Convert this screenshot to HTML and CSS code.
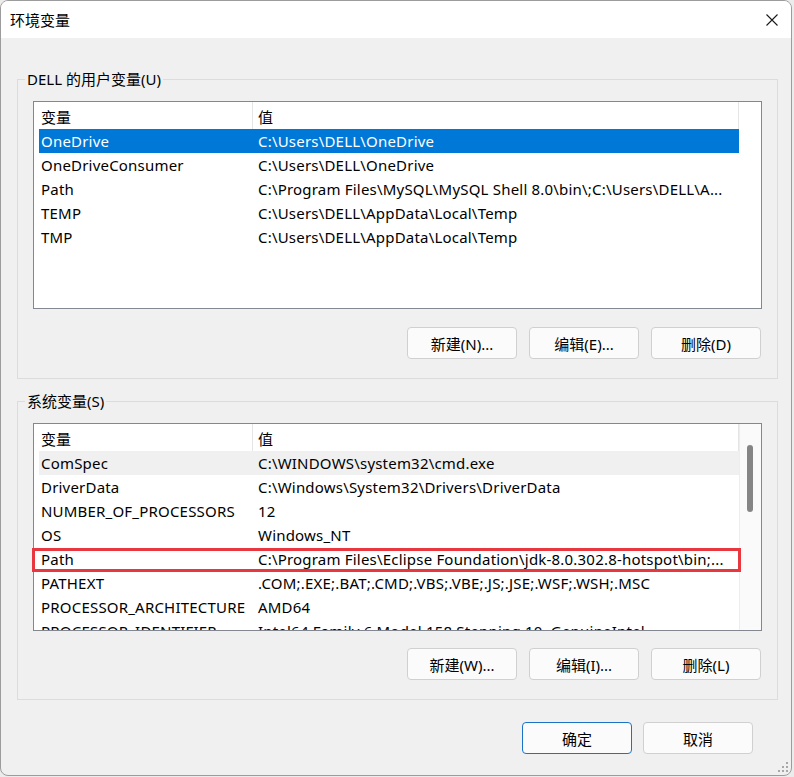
FILE: index.html
```html
<!DOCTYPE html>
<html lang="zh-CN">
<head>
    <meta charset="UTF-8">
    <title>环境变量</title>
    <link rel="stylesheet" href="styles.css">
</head>
<body>
    <div class="window">
        <div class="titlebar">
            <span class="title">环境变量</span>
            <span class="close">
                <svg width="12" height="12" viewBox="0 0 12 12"><path d="M0.5 0.5 L11.5 11.5 M11.5 0.5 L0.5 11.5" stroke="#1a1a1a" stroke-width="1.1" fill="none"/></svg>
            </span>
        </div>

        <div class="content">
            <!-- 用户变量 -->
            <fieldset class="group">
                <legend>DELL 的用户变量(U)</legend>
                <div class="list-wrap">
                    <div class="list">
                        <div class="list-body">
                            <div class="list-head">
                                <div class="col-name">变量</div>
                                <div class="col-value">值</div>
                            </div>
                            <div class="row selected"><div class="cell-name">OneDrive</div><div class="cell-value">C:\Users\DELL\OneDrive</div></div>
                            <div class="row"><div class="cell-name">OneDriveConsumer</div><div class="cell-value">C:\Users\DELL\OneDrive</div></div>
                            <div class="row"><div class="cell-name">Path</div><div class="cell-value">C:\Program Files\MySQL\MySQL Shell 8.0\bin\;C:\Users\DELL\A...</div></div>
                            <div class="row"><div class="cell-name">TEMP</div><div class="cell-value">C:\Users\DELL\AppData\Local\Temp</div></div>
                            <div class="row"><div class="cell-name">TMP</div><div class="cell-value">C:\Users\DELL\AppData\Local\Temp</div></div>
                        </div>
                        <div class="list-side"></div>
                    </div>
                </div>
                <div class="buttons">
                    <button class="btn">新建(N)...</button>
                    <button class="btn">编辑(E)...</button>
                    <button class="btn">删除(D)</button>
                </div>
            </fieldset>

            <!-- 系统变量 -->
            <fieldset class="group group-system">
                <legend>系统变量(S)</legend>
                <div class="list-wrap">
                    <div class="list">
                        <div class="list-body">
                            <div class="list-head">
                                <div class="col-name">变量</div>
                                <div class="col-value">值</div>
                            </div>
                            <div class="row hover"><div class="cell-name">ComSpec</div><div class="cell-value">C:\WINDOWS\system32\cmd.exe</div></div>
                            <div class="row"><div class="cell-name">DriverData</div><div class="cell-value">C:\Windows\System32\Drivers\DriverData</div></div>
                            <div class="row"><div class="cell-name">NUMBER_OF_PROCESSORS</div><div class="cell-value">12</div></div>
                            <div class="row"><div class="cell-name">OS</div><div class="cell-value">Windows_NT</div></div>
                            <div class="row"><div class="cell-name">Path</div><div class="cell-value">C:\Program Files\Eclipse Foundation\jdk-8.0.302.8-hotspot\bin;...</div></div>
                            <div class="row"><div class="cell-name">PATHEXT</div><div class="cell-value">.COM;.EXE;.BAT;.CMD;.VBS;.VBE;.JS;.JSE;.WSF;.WSH;.MSC</div></div>
                            <div class="row"><div class="cell-name">PROCESSOR_ARCHITECTURE</div><div class="cell-value">AMD64</div></div>
                            <div class="row"><div class="cell-name">PROCESSOR_IDENTIFIER</div><div class="cell-value">Intel64 Family 6 Model 158 Stepping 10, GenuineIntel</div></div>
                        </div>
                        <div class="list-side scrollbar"><div class="thumb"></div></div>
                    </div>
                    <!-- 标注框 -->
                    <div class="mark"></div>
                </div>
                <div class="buttons">
                    <button class="btn">新建(W)...</button>
                    <button class="btn">编辑(I)...</button>
                    <button class="btn">删除(L)</button>
                </div>
            </fieldset>

            <div class="dialog-buttons">
                <button class="btn btn-default">确定</button>
                <button class="btn">取消</button>
            </div>
        </div>

        <svg class="grip" width="11" height="11" viewBox="0 0 11 11">
            <rect x="8" y="0" width="2" height="2" fill="#a8a8a8"/>
            <rect x="4" y="4" width="2" height="2" fill="#a8a8a8"/>
            <rect x="8" y="4" width="2" height="2" fill="#a8a8a8"/>
            <rect x="0" y="8" width="2" height="2" fill="#a8a8a8"/>
            <rect x="4" y="8" width="2" height="2" fill="#a8a8a8"/>
            <rect x="8" y="8" width="2" height="2" fill="#a8a8a8"/>
        </svg>
    </div>
</body>
</html>
```

FILE: styles.css
```css
html {
    background: #ececec;
}
body {
    margin: 0;
    font-family: "Noto Sans", "Noto Sans CJK SC", sans-serif;
    font-size: 15px;
    color: #000;
}
.window {
    position: relative;
    width: 792px;
    height: 776px;
    box-sizing: border-box;
    border: 1px solid #9c9c9c;
    border-radius: 8px;
    background: #f0f0f0;
    overflow: hidden;
}
.titlebar {
    height: 37px;
    background: #fff;
    display: flex;
    align-items: center;
    justify-content: space-between;
    padding: 0 13px 0 9px;
}
.title {
    line-height: 20px;
}
.close {
    display: flex;
}
.content {
    padding: 0 13px 0 16px;
}
.group {
    margin: 31px 0 0 0;
    padding: 12px 15px 19px 15px;
    border: 1px solid #dcdcdc;
    min-width: 0;
}
.group-system {
    margin-top: 12px;
}
.group legend {
    padding: 0 2px;
    margin-left: -8px;
    line-height: 20px;
}
.list-wrap {
    position: relative;
}
.list {
    height: 208px;
    box-sizing: border-box;
    border: 1px solid #828790;
    background: #fff;
    display: flex;
    overflow: hidden;
}
.list-body {
    width: 705px;
    padding-left: 5px;
    box-sizing: border-box;
}
.list-side {
    flex: 1;
}
.scrollbar {
    background: #fafafa;
    border-left: 1px solid #ededed;
}
.thumb {
    width: 6px;
    height: 67px;
    margin: 21px 0 0 7px;
    background: #858585;
    border-radius: 3px;
}
.list-head {
    display: grid;
    grid-template-columns: 213px 487px;
    height: 27px;
}
.list-head div {
    padding-top: 4px;
    line-height: 23px;
}
.col-name {
    padding-left: 2px;
}
.col-value {
    padding-left: 5px;
    border-left: 1px solid #e5e5e5;
    border-right: 1px solid #e5e5e5;
}
.row {
    display: grid;
    grid-template-columns: 213px 487px;
    height: 24px;
    line-height: 24px;
    white-space: nowrap;
    letter-spacing: 0.2px;
}
.row div {
    overflow: hidden;
}
.cell-name {
    padding-left: 2px;
}
.cell-value {
    padding-left: 6px;
}
.row.selected {
    background: #0078d7;
    color: #fff;
}
.row.hover {
    background: #f0f0f0;
}
.mark {
    position: absolute;
    left: -1px;
    top: 125px;
    width: 709px;
    height: 24px;
    box-sizing: border-box;
    border: 3px solid #e8373e;
}
.buttons {
    display: flex;
    justify-content: flex-end;
    gap: 12px;
    margin-top: 18px;
    padding-right: 1px;
}
.group-system .buttons {
    margin-top: 17px;
}
.btn {
    width: 110px;
    height: 32px;
    font-family: inherit;
    font-size: 15px;
    color: #000;
    background: #fbfbfb;
    border: 1px solid #d0d0d0;
    border-radius: 4px;
    padding: 0;
}
.btn-default {
    border-color: #1b73c8;
}
.dialog-buttons {
    display: flex;
    justify-content: flex-end;
    gap: 11px;
    margin-top: 22px;
    padding-right: 25px;
}
.grip {
    position: absolute;
    right: 2px;
    bottom: 2px;
}
```
